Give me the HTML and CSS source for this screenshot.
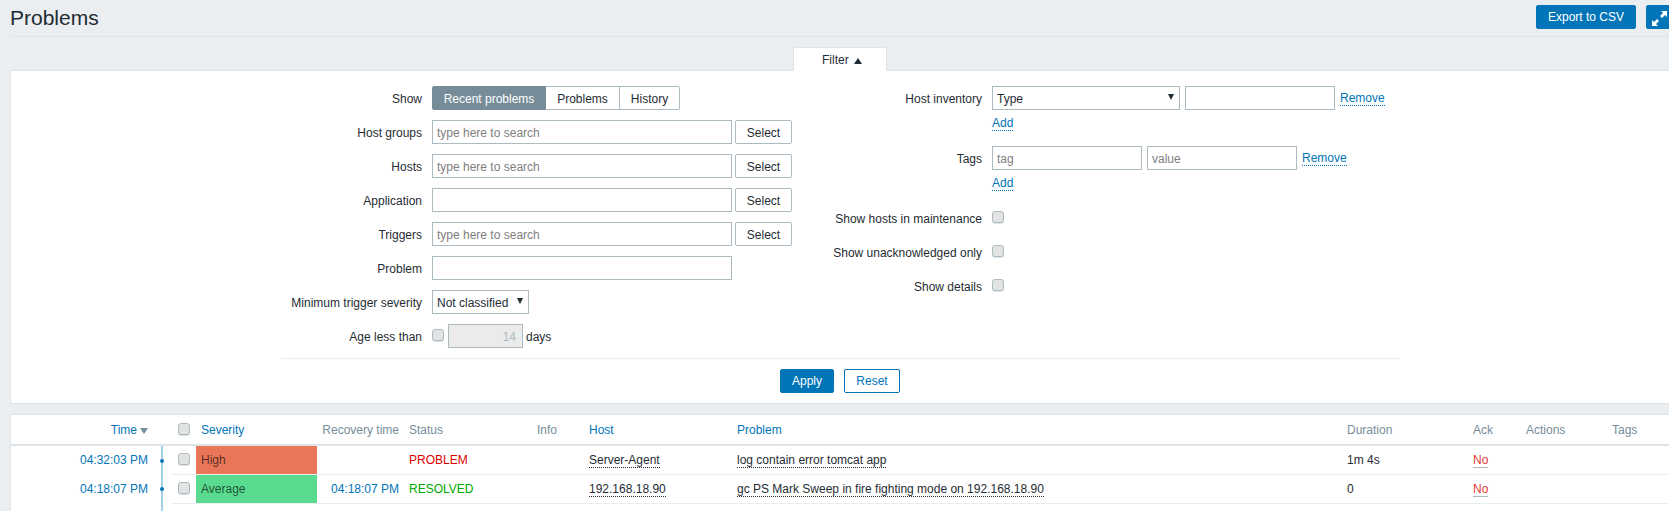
FILE: index.html
```html
<!DOCTYPE html>
<html>
<head>
    <meta charset="UTF-8">
    <title>Problems</title>
    <link rel="stylesheet" href="styles.css">
</head>
<body>
    <div class="page">
        <!-- Page header -->
        <header class="page-header">
            <h1>Problems</h1>
            <div class="header-actions">
                <button type="button" class="btn btn-primary">Export to CSV</button>
                <button type="button" class="btn btn-primary btn-icon" aria-label="Fullscreen">
                    <svg width="24" height="24" viewBox="0 0 24 24">
                        <path fill="#fff" d="M15 6h6v6l-2-2-3 3-2-2 3-3zM12 21H6v-6l2 2 3-3 2 2-3 3z"/>
                    </svg>
                </button>
            </div>
        </header>

        <!-- Filter -->
        <div class="filter-tabs">
            <div class="filter-tab">Filter <span class="arrow-up"></span></div>
        </div>
        <section class="panel filter">
            <div class="filter-cols">
                <div class="filter-col filter-col-left">
                    <div class="row">
                        <label>Show</label>
                        <div class="segmented">
                            <span class="seg seg-active seg-recent">Recent problems</span>
                            <span class="seg seg-problems">Problems</span>
                            <span class="seg seg-history">History</span>
                        </div>
                    </div>
                    <div class="row">
                        <label>Host groups</label>
                        <input class="input input-wide" placeholder="type here to search">
                        <button type="button" class="btn btn-select">Select</button>
                    </div>
                    <div class="row">
                        <label>Hosts</label>
                        <input class="input input-wide" placeholder="type here to search">
                        <button type="button" class="btn btn-select">Select</button>
                    </div>
                    <div class="row">
                        <label>Application</label>
                        <input class="input input-wide">
                        <button type="button" class="btn btn-select">Select</button>
                    </div>
                    <div class="row">
                        <label>Triggers</label>
                        <input class="input input-wide" placeholder="type here to search">
                        <button type="button" class="btn btn-select">Select</button>
                    </div>
                    <div class="row">
                        <label>Problem</label>
                        <input class="input input-wide">
                    </div>
                    <div class="row">
                        <label>Minimum trigger severity</label>
                        <div class="select select-severity">Not classified<span class="arrow-down"></span></div>
                    </div>
                    <div class="row">
                        <label>Age less than</label>
                        <span class="check"></span>
                        <input class="input input-age" value="14" disabled>
                        <span class="days">days</span>
                    </div>
                </div>
                <div class="filter-col filter-col-right">
                    <div class="row">
                        <label>Host inventory</label>
                        <div class="select select-type">Type<span class="arrow-down"></span></div>
                        <input class="input input-short">
                        <a class="link">Remove</a>
                    </div>
                    <div class="row-add"><a class="link">Add</a></div>
                    <div class="row">
                        <label>Tags</label>
                        <input class="input input-short" placeholder="tag">
                        <input class="input input-short" placeholder="value">
                        <a class="link">Remove</a>
                    </div>
                    <div class="row-add"><a class="link">Add</a></div>
                    <div class="row">
                        <label>Show hosts in maintenance</label>
                        <span class="check"></span>
                    </div>
                    <div class="row">
                        <label>Show unacknowledged only</label>
                        <span class="check"></span>
                    </div>
                    <div class="row">
                        <label>Show details</label>
                        <span class="check"></span>
                    </div>
                </div>
            </div>
            <div class="filter-buttons">
                <button type="button" class="btn btn-primary btn-apply">Apply</button>
                <button type="button" class="btn btn-reset">Reset</button>
            </div>
        </section>

        <!-- Problems table -->
        <section class="panel results">
            <table class="problems">
                <colgroup>
                    <col class="c-time"><col class="c-line"><col class="c-check"><col class="c-severity">
                    <col class="c-recovery"><col class="c-status"><col class="c-info"><col class="c-host">
                    <col class="c-problem"><col class="c-duration"><col class="c-ack"><col class="c-actions"><col class="c-tags">
                </colgroup>
                <thead>
                    <tr>
                        <th class="right"><a class="sort">Time</a><span class="arrow-sort"></span></th>
                        <th></th>
                        <th class="cell-check"><span class="check"></span></th>
                        <th><a class="sort">Severity</a></th>
                        <th class="right">Recovery time</th>
                        <th>Status</th>
                        <th>Info</th>
                        <th><a class="sort">Host</a></th>
                        <th><a class="sort">Problem</a></th>
                        <th>Duration</th>
                        <th>Ack</th>
                        <th>Actions</th>
                        <th>Tags</th>
                    </tr>
                </thead>
                <tbody>
                    <tr>
                        <td class="right time">04:32:03 PM</td>
                        <td class="timeline"><span class="dot"></span></td>
                        <td class="cell-check"><span class="check"></span></td>
                        <td class="sev sev-high">High</td>
                        <td class="right time"></td>
                        <td class="st-problem">PROBLEM</td>
                        <td></td>
                        <td><span class="dotted">Server-Agent</span></td>
                        <td><span class="dotted">log contain error tomcat app</span></td>
                        <td>1m 4s</td>
                        <td><span class="ack">No</span></td>
                        <td></td>
                        <td></td>
                    </tr>
                    <tr>
                        <td class="right time">04:18:07 PM</td>
                        <td class="timeline"><span class="dot"></span></td>
                        <td class="cell-check"><span class="check"></span></td>
                        <td class="sev sev-average">Average</td>
                        <td class="right time">04:18:07 PM</td>
                        <td class="st-resolved">RESOLVED</td>
                        <td></td>
                        <td><span class="dotted">192.168.18.90</span></td>
                        <td><span class="dotted">gc PS Mark Sweep in fire fighting mode on 192.168.18.90</span></td>
                        <td>0</td>
                        <td><span class="ack">No</span></td>
                        <td></td>
                        <td></td>
                    </tr>
                    <!-- Rest of the list is below the fold -->
                    <tr class="row-next">
                        <td></td>
                        <td class="timeline"></td>
                        <td colspan="11"></td>
                    </tr>
                </tbody>
            </table>
        </section>
    </div>
</body>
</html>
```

FILE: styles.css
```css
/* Page */
html, body {
    margin: 0;
    height: 100%;
    overflow: hidden;
}

body {
    background-color: #ebeef0;
    color: #1f2c33;
    font-family: "Liberation Sans", Arial, sans-serif;
    font-size: 12px;
}

.page {
    width: 1670px;
    padding: 0 10px;
}

/* Header */
.page-header {
    display: flex;
    justify-content: space-between;
    height: 36px;
    border-bottom: 1px solid #dfe4e7;
}

.page-header h1 {
    margin: 0;
    padding-top: 5px;
    font-size: 21px;
    font-weight: normal;
    line-height: 26px;
}

.header-actions {
    display: flex;
    gap: 10px;
    padding-top: 5px;
    padding-right: 10px;
}

/* Buttons */
.btn {
    box-sizing: border-box;
    height: 24px;
    padding: 0 11px;
    border: 1px solid #0275b8;
    border-radius: 2px;
    background-color: #fff;
    color: #0275b8;
    font-family: inherit;
    font-size: 12px;
    cursor: pointer;
}

.btn-primary {
    background-color: #0275b8;
    color: #fff;
}

.btn-icon {
    width: 24px;
    padding: 0;
}

.btn-icon svg {
    display: block;
    margin: -1px;
}

.btn-select {
    width: 57px;
    padding: 1px 0 0;
    margin-left: 3px;
    border-color: #acbbc2;
    color: #1f2c33;
}

.btn-apply {
    width: 54px;
    padding: 0;
}

.btn-reset {
    width: 56px;
    padding: 0;
}

/* Filter tab */
.filter-tabs {
    display: flex;
    margin-top: 10px;
    padding-left: 783px;
}

.filter-tab {
    box-sizing: border-box;
    width: 94px;
    height: 24px;
    margin-bottom: -1px;
    padding-left: 4px;
    border: 1px solid #dfe4e7;
    border-bottom: none;
    background-color: #fff;
    line-height: 24px;
    text-align: center;
    position: relative;
    z-index: 1;
}

.arrow-up {
    display: inline-block;
    width: 0;
    height: 0;
    margin-left: 2px;
    border-left: 4.5px solid transparent;
    border-right: 4.5px solid transparent;
    border-bottom: 6px solid #1f2c33;
}

.panel {
    border: 1px solid #dfe4e7;
    background-color: #fff;
}

/* Filter form */
.filter {
    box-sizing: border-box;
    height: 334px;
    padding: 15px 0 0 270px;
}

.filter-cols {
    display: flex;
    width: 1119px;
    height: 272px;
}

.filter-col-left {
    width: 540px;
}

.row {
    display: flex;
    align-items: center;
    gap: 5px;
    height: 24px;
    margin-bottom: 10px;
}

.row label {
    flex: none;
    width: 161px;
    margin-right: 5px;
    padding-top: 1px;
    text-align: right;
    white-space: nowrap;
}

.filter-col-left .row {
    gap: 0;
}

.filter-col-left .row label {
    width: 141px;
    margin-right: 10px;
}

.row-add {
    height: 22px;
    margin-top: -10px;
    margin-bottom: 14px;
    padding-left: 171px;
    line-height: 26px;
}

.input {
    box-sizing: border-box;
    height: 24px;
    padding: 1px 4px 0;
    border: 1px solid #acbbc2;
    border-radius: 0;
    background-color: #fff;
    color: #1f2c33;
    font-family: inherit;
    font-size: 12px;
    outline: none;
}

.input::placeholder {
    color: #808080;
}

.input-wide {
    width: 300px;
}

.input-short {
    width: 150px;
}

.input-age {
    width: 75px;
    margin-left: 4px;
    padding-right: 6px;
    background-color: #ebebeb;
    color: #acbbc2;
    text-align: right;
}

.days {
    margin-left: 3px;
    padding-top: 1px;
}

/* Segmented radio */
.segmented {
    display: flex;
    height: 24px;
}

.seg {
    box-sizing: border-box;
    height: 24px;
    padding-top: 1px;
    border: 1px solid #acbbc2;
    border-left: none;
    line-height: 22px;
    text-align: center;
}

.seg-active {
    border: 1px solid #768d99;
    border-radius: 2px 0 0 2px;
    background-color: #768d99;
    color: #fff;
}

.seg-recent {
    width: 114px;
}

.seg-problems {
    width: 74px;
}

.seg-history {
    width: 60px;
    border-radius: 0 2px 2px 0;
}

/* Select */
.select {
    box-sizing: border-box;
    display: flex;
    align-items: center;
    justify-content: space-between;
    height: 24px;
    padding: 1px 4px 0;
    border: 1px solid #acbbc2;
    background-color: #fff;
}

.select-severity {
    width: 97px;
}

.select-type {
    width: 188px;
}

.arrow-down {
    width: 0;
    height: 0;
    margin-right: 1px;
    margin-bottom: 3px;
    border-left: 3.5px solid transparent;
    border-right: 3.5px solid transparent;
    border-top: 6px solid #1f2c33;
}

/* Checkbox */
.check {
    box-sizing: border-box;
    display: inline-block;
    flex: none;
    width: 12px;
    height: 12px;
    margin-bottom: 2px;
    border: 1px solid #acbbc2;
    border-radius: 3px;
    background-color: #e3e3e3;
    box-shadow: 0 1px 0 #dfe4e7;
    vertical-align: middle;
}

/* Links */
.link {
    margin-top: 1px;
    color: #0275b8;
    border-bottom: 1px dotted #0275b8;
    line-height: 14px;
}

/* Filter buttons */
.filter-buttons {
    box-sizing: border-box;
    display: flex;
    justify-content: center;
    gap: 10px;
    width: 1119px;
    padding-top: 10px;
    padding-right: 1px;
    border-top: 1px solid #ebeef0;
}

/* Problems table */
.results {
    margin-top: 10px;
    border-bottom: none;
}

.problems {
    table-layout: fixed;
    width: 1670px;
    border-collapse: collapse;
}

.c-time { width: 144px; }
.c-line { width: 17px; }
.c-check { width: 24px; }
.c-severity { width: 121px; }
.c-recovery { width: 87px; }
.c-status { width: 128px; }
.c-info { width: 52px; }
.c-host { width: 148px; }
.c-problem { width: 610px; }
.c-duration { width: 126px; }
.c-ack { width: 53px; }
.c-actions { width: 86px; }
.c-tags { width: 74px; }

.problems th,
.problems td {
    height: 28px;
    padding: 0 5px;
    box-sizing: border-box;
    font-weight: normal;
    text-align: left;
    white-space: nowrap;
}

.problems th {
    height: 30px;
    color: #768d99;
    border-bottom: 2px solid #dfe4e7;
}

.problems td {
    height: 29px;
    border-bottom: 1px solid #ebeef0;
}

.problems .right {
    text-align: right;
}

.problems th:first-child,
.problems td:first-child {
    padding-right: 7px;
}

.problems td:first-child,
.problems td.timeline {
    border-bottom: none;
}

.problems .cell-check {
    padding: 0 0 0 6px;
}

.problems .row-next td {
    border-bottom: none;
}

.sort {
    color: #0275b8;
}

.arrow-sort {
    display: inline-block;
    width: 0;
    height: 0;
    margin-left: 3px;
    border-left: 4px solid transparent;
    border-right: 4px solid transparent;
    border-top: 6px solid #768d99;
}

.time {
    color: #0275b8;
}

.problems .timeline {
    position: relative;
    padding: 0;
}

.timeline::before {
    content: "";
    position: absolute;
    left: 6px;
    top: 0;
    bottom: 0;
    width: 2px;
    background-color: #a3d1ec;
}

.dot {
    position: absolute;
    left: 5px;
    top: 13px;
    width: 4px;
    height: 4px;
    border-radius: 50%;
    background-color: #0275b8;
}

.sev {
    color: rgba(0, 0, 0, 0.65);
}

.sev-high {
    background-color: #e97659;
}

.sev-average {
    background-color: #59db8f;
}

.st-problem {
    color: #dc0000;
}

.st-resolved {
    color: #00aa00;
}

.dotted {
    border-bottom: 1px dotted #1f2c33;
}

.ack {
    color: #e33734;
    border-bottom: 1px solid #acbbc2;
}
```
